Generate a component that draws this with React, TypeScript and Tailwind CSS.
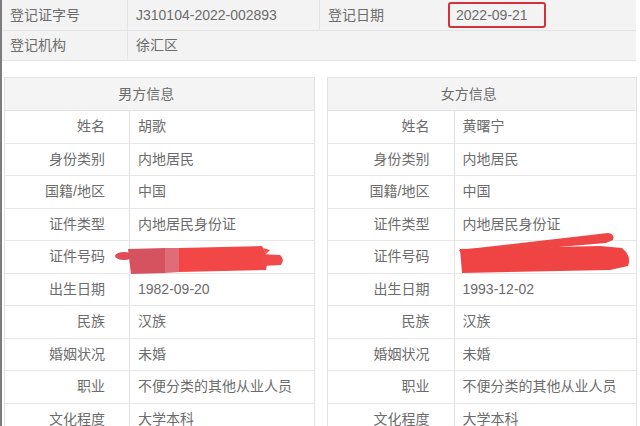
const man = [
  ["姓名", "胡歌"],
  ["身份类别", "内地居民"],
  ["国籍/地区", "中国"],
  ["证件类型", "内地居民身份证"],
  ["证件号码", ""],
  ["出生日期", "1982-09-20"],
  ["民族", "汉族"],
  ["婚姻状况", "未婚"],
  ["职业", "不便分类的其他从业人员"],
  ["文化程度", "大学本科"],
];

const woman = [
  ["姓名", "黄曙宁"],
  ["身份类别", "内地居民"],
  ["国籍/地区", "中国"],
  ["证件类型", "内地居民身份证"],
  ["证件号码", ""],
  ["出生日期", "1993-12-02"],
  ["民族", "汉族"],
  ["婚姻状况", "未婚"],
  ["职业", "不便分类的其他从业人员"],
  ["文化程度", "大学本科"],
];

function PersonTable({ title, rows, labelWidth }: { title: string; rows: string[][]; labelWidth: string }) {
  return (
    <div className="flex-1 border border-[#e2e2e2]">
      <div className="flex h-[33px] items-center justify-center border-b border-[#e2e2e2] bg-[#f4f4f4] pr-[26px] text-[14px] text-[#6c6c6c]">
        {title}
      </div>
      {rows.map(([label, value]) => (
        <div key={label} className="flex h-[32.5px] border-b border-[#e6e6e6] text-[14px] text-[#6c6c6c]">
          <div className={`${labelWidth} flex shrink-0 items-center justify-end border-r border-[#e2e2e2] pr-[24px]`}>
            {label}
          </div>
          <div className="flex flex-1 items-center pl-[8px]">{value}</div>
        </div>
      ))}
    </div>
  );
}

export default function App() {
  return (
    <div className="relative h-[426px] w-[640px] overflow-hidden border-l-2 border-[#7c7c7c] bg-white font-['Liberation_Sans','Noto_Sans_CJK_SC',sans-serif]">
      <div className="mr-[4px] bg-[#f3f3f3] text-[14px] text-[#6c6c6c]">
        <div className="flex h-[31px] border-b border-[#e4e4e4]">
          <div className="flex w-[126px] items-center border-r border-[#e4e4e4] pl-[8px]">登记证字号</div>
          <div className="flex w-[192px] items-center border-r border-[#e4e4e4] pl-[8px]">J310104-2022-002893</div>
          <div className="flex w-[128px] items-center pl-[8px]">登记日期</div>
          <div className="flex flex-1 items-center">
            <div className="flex h-[26px] w-[98px] items-center rounded-[3px] border-2 border-[#d2323c] pl-[6px]">
              2022-09-21
            </div>
          </div>
        </div>
        <div className="flex h-[30px] border-b border-[#e4e4e4]">
          <div className="flex w-[126px] items-center border-r border-[#e4e4e4] pl-[8px]">登记机构</div>
          <div className="flex w-[192px] items-center pl-[8px]">徐汇区</div>
          <div className="flex-1" />
        </div>
      </div>

      <div className="mt-[16px] flex gap-[12px] pl-[2px] pr-[3px]">
        <PersonTable title="男方信息" rows={man} labelWidth="w-[125px]" />
        <PersonTable title="女方信息" rows={woman} labelWidth="w-[127px]" />
      </div>

      <svg className="pointer-events-none absolute left-[-2px] top-0" width="640" height="426">
        <ellipse cx="124" cy="256" rx="9" ry="4" fill="#e04c58" />
        <path d="M128 249 L166 248 L166 273 L131 274 Z" fill="#d4535f" />
        <path d="M165 248 L180 248 L180 272 L165 273 Z" fill="#e06c77" />
        <path d="M179 248 L262 246 L268 258 L266 270 L179 272 Z" fill="#f34747" />
        <path d="M260 254 L280 255 Q285 259 281 265 L262 266 Z" fill="#f04a4a" />
        <path d="M263 248 L270 250 L266 254 Z" fill="#f35050" />

        <path d="M459 250 L608 233 Q615 234 613 240 L606 243 L462 255 Z" fill="#ee4545" />
        <path d="M460 249 L600 246 L622 248 Q632 256 628 266 L610 270 L462 273 Z" fill="#f04444" />
      </svg>
    </div>
  );
}
